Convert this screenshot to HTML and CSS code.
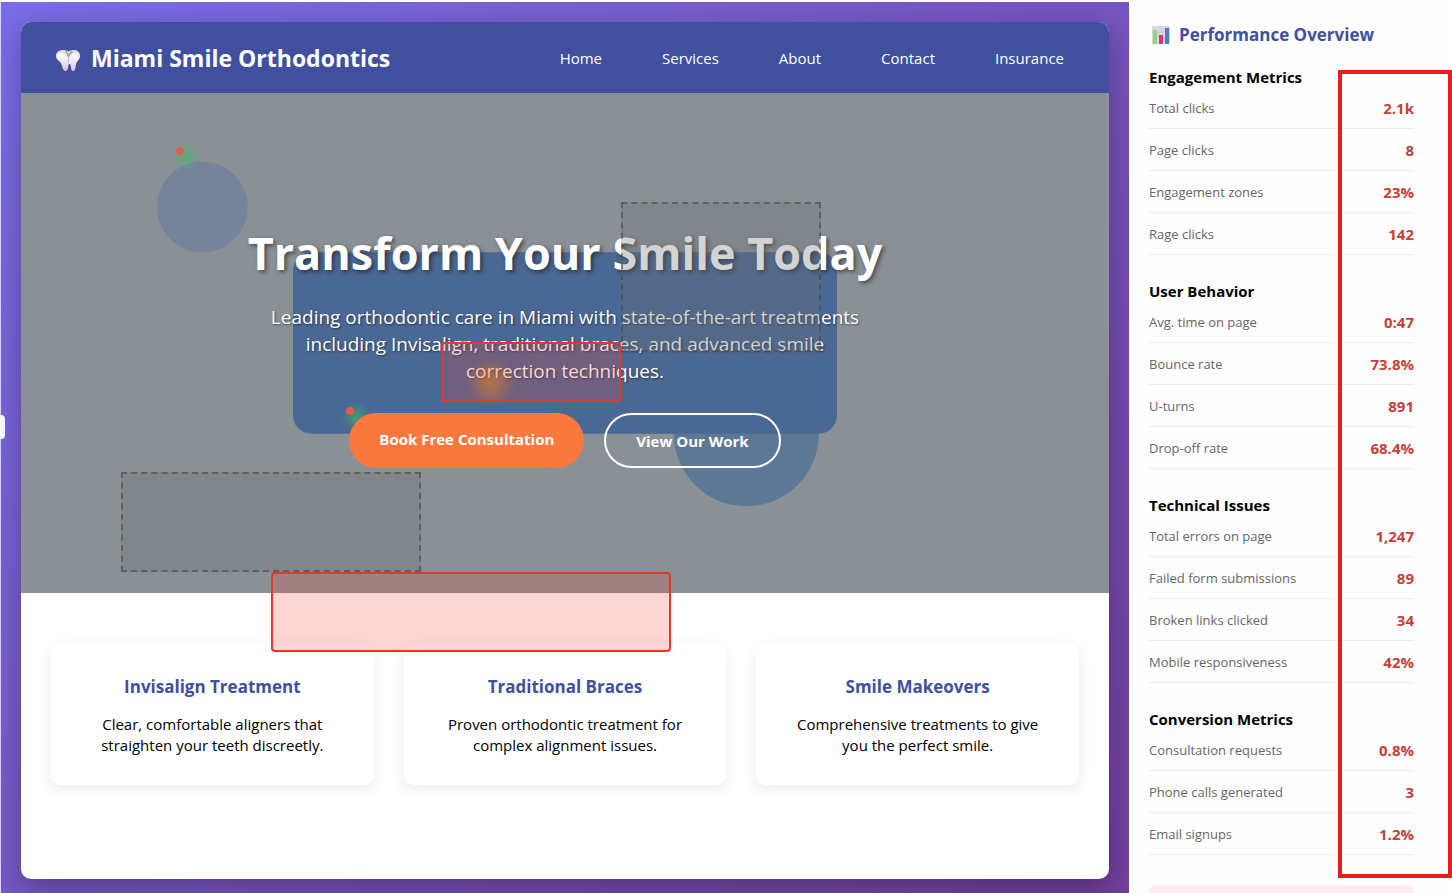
FILE: index.html
```html
<!DOCTYPE html>
<html lang="en">
<head>
    <meta charset="UTF-8">
    <meta name="viewport" content="width=device-width, initial-scale=1.0">
    <title>Miami Smile Orthodontics - Heatmap</title>
    <link rel="stylesheet" href="styles.css">
</head>
<body>
    <div class="dashboard">
        <main class="heatmap">
            <span class="drawer-handle"></span>
            <div class="website">
                <header class="header">
                    <div class="logo">
                        <svg class="tooth" viewBox="0 0 26 24" aria-hidden="true">
                            <defs>
                                <linearGradient id="enamel" x1="0" y1="0" x2="0" y2="1">
                                    <stop offset="0" stop-color="#d3d8d8"/>
                                    <stop offset="0.4" stop-color="#f3eef4"/>
                                    <stop offset="1" stop-color="#dcc3e3"/>
                                </linearGradient>
                            </defs>
                            <path fill="url(#enamel)" d="M1 8C1 4 4 2 8 2C10.500 2 12 2.500 13.500 3.500C15 2.500 17 2 19 2C23 2 25 4.500 25 8C25 11.500 22 13 21 16C20.500 19 20.500 23 18 23C16 23 16 19 15.500 17C15 15.500 14 15.500 13.500 17C13 19 13 23 10.500 23C8 23 7.500 19 6.500 16.500C5.500 13 1 12 1 8Z"/>
                            <path fill="none" stroke="#9ba69f" stroke-width="1.500" stroke-linecap="round" d="M11 3.500C12 4.500 13 6 13 8M17 4C15 5 14 6 14 8"/>
                            <path fill="none" stroke="#c9b3d2" stroke-width="1" stroke-linecap="round" d="M13.500 9V14"/>
                            <ellipse cx="6.500" cy="7.500" rx="3.500" ry="3" fill="#fff" opacity="0.7"/>
                            <ellipse cx="20" cy="7.500" rx="3" ry="3" fill="#fff" opacity="0.7"/>
                        </svg>
                        <span>Miami Smile Orthodontics</span>
                    </div>
                    <nav class="nav">
                        <a href="#">Home</a>
                        <a href="#">Services</a>
                        <a href="#">About</a>
                        <a href="#">Contact</a>
                        <a href="#">Insurance</a>
                    </nav>
                </header>

                <section class="hero">
                    <svg class="hero-bg" viewBox="0 0 1200 800" preserveAspectRatio="xMidYMid slice" aria-hidden="true">
                        <rect width="1200" height="800" fill="#899196"/>
                        <circle cx="200" cy="250" r="50" fill="#75849b"/>
                        <circle cx="800" cy="500" r="80" fill="#5c7895"/>
                        <rect x="300" y="300" width="600" height="200" rx="20" fill="#4a6894"/>
                    </svg>
                    <span class="spot spot-green spot-a"></span>
                    <span class="spot spot-green spot-b"></span>
                    <span class="click click-a"></span>
                    <span class="click click-b"></span>
                    <div class="hero-content">
                        <h1>Transform Your Smile Today</h1>
                        <p>Leading orthodontic care in Miami with state-of-the-art treatments including Invisalign, traditional braces, and advanced smile correction techniques.</p>
                        <div class="buttons">
                            <button class="btn btn-primary">Book Free Consultation</button>
                            <button class="btn btn-outline">View Our Work</button>
                        </div>
                    </div>
                </section>

                <section class="services">
                    <div class="card">
                        <h3>Invisalign Treatment</h3>
                        <p>Clear, comfortable aligners that straighten your teeth discreetly.</p>
                    </div>
                    <div class="card">
                        <h3>Traditional Braces</h3>
                        <p>Proven orthodontic treatment for complex alignment issues.</p>
                    </div>
                    <div class="card">
                        <h3>Smile Makeovers</h3>
                        <p>Comprehensive treatments to give you the perfect smile.</p>
                    </div>
                </section>

                <!-- Heatmap overlays -->
                <span class="spot spot-orange"></span>
                <div class="zone dead-zone dead-a"></div>
                <div class="zone dead-zone dead-b"></div>
                <div class="zone rage-zone rage-a"></div>
                <div class="zone rage-zone rage-b"></div>
            </div>
        </main>

        <aside class="sidebar">
            <h2>
                <svg class="chart" viewBox="0 0 20 20" aria-hidden="true">
                    <rect x="1" y="1" width="18" height="18" rx="1" fill="#dcd5df"/>
                    <path d="M1 7H19M1 13H19" stroke="#cdc8d4"/>
                    <rect x="2" y="5" width="4" height="14" fill="#8fd387"/>
                    <rect x="8" y="10" width="4" height="9" fill="#cf3d6b"/>
                    <rect x="14" y="3" width="4" height="16" fill="#4282c8"/>
                </svg>
                <span>Performance Overview</span>
            </h2>

            <section class="metrics">
                <h4>Engagement Metrics</h4>
                <table>
                    <tr><th scope="row">Total clicks</th><td>2.1k</td></tr>
                    <tr><th scope="row">Page clicks</th><td>8</td></tr>
                    <tr><th scope="row">Engagement zones</th><td>23%</td></tr>
                    <tr><th scope="row">Rage clicks</th><td>142</td></tr>
                </table>
            </section>

            <section class="metrics">
                <h4>User Behavior</h4>
                <table>
                    <tr><th scope="row">Avg. time on page</th><td>0:47</td></tr>
                    <tr><th scope="row">Bounce rate</th><td>73.8%</td></tr>
                    <tr><th scope="row">U-turns</th><td>891</td></tr>
                    <tr><th scope="row">Drop-off rate</th><td>68.4%</td></tr>
                </table>
            </section>

            <section class="metrics">
                <h4>Technical Issues</h4>
                <table>
                    <tr><th scope="row">Total errors on page</th><td>1,247</td></tr>
                    <tr><th scope="row">Failed form submissions</th><td>89</td></tr>
                    <tr><th scope="row">Broken links clicked</th><td>34</td></tr>
                    <tr><th scope="row">Mobile responsiveness</th><td>42%</td></tr>
                </table>
            </section>

            <section class="metrics">
                <h4>Conversion Metrics</h4>
                <table>
                    <tr><th scope="row">Consultation requests</th><td>0.8%</td></tr>
                    <tr><th scope="row">Phone calls generated</th><td>3</td></tr>
                    <tr><th scope="row">Email signups</th><td>1.2%</td></tr>
                </table>
            </section>

            <div class="alert"></div>
            <div class="highlight-box"></div>
        </aside>
    </div>
</body>
</html>
```
FILE: styles.css
```css
* {
    margin: 0;
    padding: 0;
    box-sizing: border-box;
}

body {
    font-family: "Segoe UI", "Open Sans", "Noto Sans", sans-serif;
    background: white;
    color: black;
}

.dashboard {
    display: flex;
    height: 100vh;
    overflow: hidden;
}

.heatmap {
    position: relative;
    flex: 1;
    min-width: 0;
    margin-top: 2px;
    padding: 20px;
    border-left: 1px solid #dcd9f5;
    background: linear-gradient(135deg, #7a6de8 0%, #733f9e 100%);
}

.drawer-handle {
    position: absolute;
    left: -1px;
    top: 413px;
    width: 5px;
    height: 24px;
    background: white;
    border-radius: 0 4px 4px 0;
}

/* Website preview */
.website {
    position: relative;
    background: white;
    border-radius: 10px;
    box-shadow: 0 10px 30px rgba(0, 0, 0, 0.3);
}

.header {
    display: flex;
    align-items: center;
    justify-content: space-between;
    height: 71px;
    padding: 0 45px 0 34px;
    background: #40509e;
    color: white;
    border-radius: 10px 10px 0 0;
}

.logo {
    display: flex;
    align-items: center;
    gap: 10px;
    font-size: 23px;
    font-weight: 700;
    line-height: 32px;
}

.tooth {
    width: 26px;
    height: 24px;
    margin-top: 4px;
}

.nav {
    display: flex;
    gap: 60px;
}

.nav a {
    color: white;
    font-size: 15px;
    line-height: 20px;
    text-decoration: none;
}

.hero {
    position: relative;
    display: flex;
    align-items: center;
    justify-content: center;
    height: 500px;
    color: white;
    text-align: center;
}

.hero-bg {
    position: absolute;
    inset: 0;
    width: 100%;
    height: 100%;
}

.hero-content {
    position: relative;
}

.hero-content h1 {
    font-size: 45px;
    line-height: 70px;
    margin-bottom: 16px;
    text-shadow: 2px 2px 4px rgba(0, 0, 0, 0.5);
}

.hero-content p {
    max-width: 600px;
    margin: 0 auto 28px;
    font-size: 19px;
    line-height: 27px;
    text-shadow: 1px 1px 2px rgba(0, 0, 0, 0.5);
}

.buttons {
    display: flex;
    justify-content: center;
    gap: 20px;
}

.btn {
    height: 55px;
    padding: 0 30px;
    border: none;
    border-radius: 30px;
    color: white;
    font-family: inherit;
    font-size: 15px;
    font-weight: 700;
    cursor: pointer;
}

.btn-primary {
    padding-bottom: 3px;
    background: #fb783e;
}

.btn-outline {
    background: transparent;
    border: 2px solid white;
}

.services {
    display: grid;
    grid-template-columns: repeat(3, 1fr);
    gap: 30px;
    padding: 50px 30px 94px;
}

.card {
    padding: 31px 30px 29px;
    background: white;
    border-radius: 10px;
    box-shadow: 0 5px 15px rgba(0, 0, 0, 0.08);
    text-align: center;
}

.card h3 {
    margin-bottom: 14px;
    color: #40509e;
    font-size: 17px;
    line-height: 26px;
}

.card p {
    font-size: 15px;
    line-height: 21px;
}

/* Overlays */
.zone {
    position: absolute;
}

.dead-zone {
    background: rgba(108, 108, 108, 0.3);
    border: 2px dashed rgba(70, 72, 72, 0.6);
}

.dead-a {
    left: 600px;
    top: 180px;
    width: 200px;
    height: 150px;
}

.dead-b {
    left: 100px;
    top: 450px;
    width: 300px;
    height: 100px;
}

.rage-zone {
    background: rgba(244, 67, 54, 0.22);
    border: 2px solid #e6382a;
    border-radius: 4px;
}

.rage-a {
    left: 420px;
    top: 320px;
    width: 180px;
    height: 60px;
}

.rage-b {
    left: 250px;
    top: 550px;
    width: 400px;
    height: 80px;
}

.spot {
    position: absolute;
    border-radius: 50%;
}

.spot-green {
    width: 30px;
    height: 30px;
    background: radial-gradient(circle, rgba(60, 190, 90, 0.6) 0%, rgba(60, 190, 90, 0) 70%);
}

.spot-a {
    left: 150px;
    top: 48px;
}

.spot-b {
    left: 320px;
    top: 309px;
}

.spot-orange {
    left: 445px;
    top: 336px;
    width: 50px;
    height: 50px;
    background: radial-gradient(circle, rgba(255, 152, 0, 0.5) 0%, rgba(255, 152, 0, 0) 70%);
}

.click {
    position: absolute;
    width: 8px;
    height: 8px;
    background: #e25b50;
    border-radius: 50%;
}

.click-a {
    left: 155px;
    top: 54px;
}

.click-b {
    left: 325px;
    top: 314px;
}

/* Sidebar */
.sidebar {
    position: relative;
    flex: 0 0 323px;
    padding: 20px 38px 0 20px;
    background: #fefefe;
}

.sidebar h2 {
    display: flex;
    align-items: center;
    gap: 8px;
    margin: 0 0 18px 2px;
    color: #40509e;
    font-size: 17px;
    font-weight: 700;
    line-height: 29px;
}

.chart {
    width: 20px;
    height: 20px;
}

.metrics {
    margin-bottom: 26px;
}

.metrics h4 {
    font-size: 15px;
    line-height: 20px;
}

.metrics table {
    width: 100%;
    border-collapse: separate;
    border-spacing: 0;
}

.metrics th,
.metrics td {
    padding: 11px 0 9px;
    border-bottom: 1px solid #eee;
    line-height: 21px;
}

.metrics th {
    color: #666;
    font-size: 13px;
    font-weight: 400;
    text-align: left;
}

.metrics td {
    color: #c5403b;
    font-size: 15px;
    font-weight: 700;
    text-align: right;
}

.alert {
    height: 60px;
    margin-top: 30px;
    background: #fdebee;
    border-radius: 8px;
}

.highlight-box {
    position: absolute;
    left: 209px;
    right: 0;
    top: 70px;
    height: 808px;
    border: 4px solid #e81e1e;
}
```
